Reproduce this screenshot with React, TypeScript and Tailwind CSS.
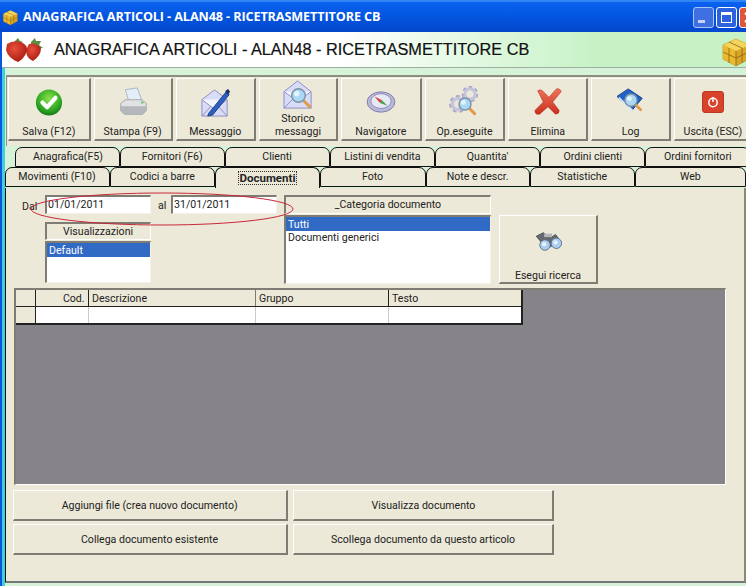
import React from 'react';

// the reference's UI font is narrower than Roboto, so labels get squeezed a bit
function T({ children, left }: { children: React.ReactNode; left?: boolean }) {
  return <span className={`inline-block whitespace-nowrap scale-x-[0.92] ${left ? 'origin-left' : ''}`}>{children}</span>;
}

function Salva() {
  return (
    <svg width="28" height="29" viewBox="0 0 30 30">
      <defs>
        <radialGradient id="gr" cx="50%" cy="35%" r="65%">
          <stop offset="0" stopColor="#8be04a" />
          <stop offset="0.7" stopColor="#2fa822" />
          <stop offset="1" stopColor="#137a18" />
        </radialGradient>
      </defs>
      <circle cx="15" cy="15" r="14" fill="url(#gr)" />
      <path d="M8 15 L13 20 L22 10" fill="none" stroke="#fff" strokeWidth="4.5" strokeLinecap="round" strokeLinejoin="round" />
    </svg>
  );
}

function Stampa() {
  return (
    <svg width="31" height="31" viewBox="0 0 34 34">
      <path d="M8 3 L21 1 L26 14 L12 16 Z" fill="#e4eef8" stroke="#a4b2c2" />
      <path d="M3 18 L8 14 L26 14 L31 18 L31 26 L27 30 L7 30 L3 26 Z" fill="#e0e2e4" stroke="#a0a3a8" />
      <path d="M3 21 L31 21 L31 26 L27 30 L7 30 L3 26 Z" fill="#b4b7bc" />
      <rect x="25" y="16" width="3" height="2" fill="#6cc26a" />
    </svg>
  );
}

function Busta() {
  return (
    <svg width="31" height="31" viewBox="0 0 32 32">
      <path d="M2 13 L15 3 L28 13 L28 30 L2 30 Z" fill="#d9dcf6" stroke="#8c8cc4" />
      <path d="M2 30 L13 18 M28 30 L17 18" stroke="#8c8cc4" fill="none" />
      <path d="M2 13 L15 23 L28 13" fill="#f4f4ff" stroke="#8c8cc4" />
      <path d="M9 27 L27 5 L30 8 L13 29 L8 30 Z" fill="#2b5fc4" stroke="#14306c" strokeWidth="0.8" />
      <path d="M26 4 L29 2 L31 5 L29 8 Z" fill="#14306c" />
    </svg>
  );
}

function Lente({ x, y, r }: { x: number; y: number; r: number }) {
  const e = x + r * 0.7;
  const f = y + r * 0.7;
  return (
    <g>
      <path d={`M${e} ${f} L${e + r * 0.9} ${f + r * 0.9}`} stroke="#e09a4a" strokeWidth="3" strokeLinecap="round" />
      <circle cx={x} cy={y} r={r} fill="#a8d8f4" stroke="#7d93a8" strokeWidth="1.5" />
      <circle cx={x - r * 0.25} cy={y - r * 0.25} r={r * 0.4} fill="#e4f4fc" />
    </g>
  );
}

function Storico() {
  return (
    <svg width="31" height="31" viewBox="0 0 32 32">
      <path d="M1 12 L15 1 L29 12 L29 29 L1 29 Z" fill="#d9dcf6" stroke="#8c8cc4" />
      <path d="M1 29 L12 18 M29 29 L20 20" stroke="#8c8cc4" fill="none" />
      <path d="M1 12 L15 22 L29 12" fill="#f4f4ff" stroke="#8c8cc4" />
      <Lente x={16} y={16} r={7} />
    </svg>
  );
}

function Bussola() {
  return (
    <svg width="32" height="24" viewBox="0 0 32 26">
      <ellipse cx="16" cy="13" rx="15" ry="11" fill="#b8b8dc" stroke="#7c7ca8" />
      <ellipse cx="16" cy="12" rx="11" ry="8" fill="#e8e8f4" stroke="#8c8cb4" />
      <path d="M9 7 L17 11 L15 14 Z" fill="#d83a2c" />
      <path d="M23 17 L17 11 L15 14 Z" fill="#3ca050" />
    </svg>
  );
}

function Gear({ x, y, r }: { x: number; y: number; r: number }) {
  return (
    <g>
      <circle cx={x} cy={y} r={r} fill="none" stroke="#a8a8c8" strokeWidth={r * 0.55} strokeDasharray={`${r * 0.5} ${r * 0.38}`} />
      <circle cx={x} cy={y} r={r * 0.8} fill="none" stroke="#c4c4dc" strokeWidth={r * 0.5} />
    </g>
  );
}

function OpEseguite() {
  return (
    <svg width="32" height="32" viewBox="0 0 32 32">
      <Gear x={9} y={18} r={7} />
      <Gear x={21} y={8} r={6.5} />
      <Lente x={16} y={18} r={6} />
    </svg>
  );
}

function Elimina() {
  return (
    <svg width="28" height="28" viewBox="0 0 30 30">
      <defs>
        <linearGradient id="rx" x1="0" y1="0" x2="0" y2="1">
          <stop offset="0" stopColor="#f0735a" />
          <stop offset="1" stopColor="#c8301c" />
        </linearGradient>
      </defs>
      <path d="M4 3 Q7 1 9 3 L16 10 L24 1 Q28 0 29 4 L20 15 L27 24 Q27 28 23 28 L15 20 L6 28 Q1 29 1 24 L10 15 Z" fill="url(#rx)" stroke="#b52a18" strokeWidth="0.6" />
    </svg>
  );
}

function LogIcon() {
  return (
    <svg width="32" height="28" viewBox="0 0 32 30">
      <path d="M1 9 L13 1 L28 11 L17 24 Z" fill="#1f63c4" stroke="#12408c" />
      <path d="M3 11 L17 26 L18 23 L3 9 Z" fill="#dbe6f4" />
      <Lente x={16} y={13} r={6.5} />
    </svg>
  );
}

function Uscita() {
  return (
    <div className="w-[22px] h-[22px] rounded-[3px] bg-[#d9432b] border border-[#b83a22] flex items-center justify-center">
      <svg width="12" height="12" viewBox="0 0 12 12">
        <circle cx="6" cy="6.5" r="4.2" fill="none" stroke="#fff" strokeWidth="1.5" />
        <path d="M6 1 L6 6" stroke="#fff" strokeWidth="1.5" />
      </svg>
    </div>
  );
}

function Binocolo() {
  return (
    <svg width="31" height="21" viewBox="0 0 32 24">
      <path d="M2 6 L10 2 L18 8 L24 4 L30 12 L14 20 Z" fill="#666a72" stroke="#44474e" />
      <rect x="11" y="3" width="9" height="4" fill="#b4b6ba" />
      <circle cx="12" cy="16" r="6" fill="#a9cdf0" stroke="#5a6c84" />
      <circle cx="25" cy="14" r="6" fill="#a9cdf0" stroke="#5a6c84" />
      <circle cx="11" cy="15" r="2.5" fill="#e4f2fc" />
      <circle cx="24" cy="13" r="2.5" fill="#e4f2fc" />
    </svg>
  );
}

function Fragole() {
  return (
    <svg width="38" height="24" viewBox="0 0 38 24">
      <defs>
        <radialGradient id="fr" cx="40%" cy="35%" r="70%">
          <stop offset="0" stopColor="#e8503a" />
          <stop offset="1" stopColor="#a81a10" />
        </radialGradient>
      </defs>
      <path d="M26 4 L30 0 L31 3 L36 3 L34 7 L38 10 L32 10 L26 8 Z" fill="#5d8f45" />
      <path d="M10 3 L13 0 L15 3 L18 4 L14 6 L9 6 Z" fill="#5d8f45" />
      <path d="M24 6 Q31 4 36 10 Q36 18 28 23 Q21 20 21 12 Z" fill="url(#fr)" />
      <path d="M2 6 Q8 2 16 4 Q23 7 22 13 Q19 21 13 24 Q3 20 1 12 Z" fill="url(#fr)" />
    </svg>
  );
}

function Cubo({ size }: { size: number }) {
  return (
    <svg width={size} height={size} viewBox="0 0 28 28">
      <path d="M14 1 L27 7 L27 21 L14 28 L1 21 L1 7 Z" fill="#d9a526" stroke="#a87a14" strokeWidth="0.6" />
      <path d="M1 7 L14 13 L27 7 L14 1 Z" fill="#f4d45c" />
      <path d="M14 13 L14 28 L1 21 L1 7 Z" fill="#eab92f" />
      <path d="M1 14 L14 20 L27 14 M14 13 L14 28 M7 4 L20 10 L20 25 M7 10 L7 25" fill="none" stroke="#8a6210" strokeWidth="0.8" />
    </svg>
  );
}

function ToolButton({ w, label, children, ml = 'ml-[3px]' }: { w: string; label: React.ReactNode; children: React.ReactNode; ml?: string }) {
  return (
    <div className={`${w} ${ml} h-[63px] bg-[#ece9d8] border-t border-l border-white border-b-2 border-r-2 border-b-[#7f7c73] border-r-[#7f7c73] flex flex-col items-center shrink-0`}>
      <div className="flex-1 min-h-0 flex items-center justify-center">{children}</div>
      <div className="pb-[1px] text-center text-[11.5px] leading-[13px] text-[#222]">{label}</div>
    </div>
  );
}

function Tab({ w, label, active }: { w: string; label: string; active?: boolean }) {
  return (
    <div className={`${w} ${active ? 'h-[21px] bg-[#ece9d8] font-bold z-10 border-b-0' : 'h-[20px] bg-[#ece9d8] border-b border-b-[#111]'} shrink-0 rounded-t-[7px] border-t border-x border-[#111] flex items-center justify-center text-[11.5px] text-[#222] relative`}>
      {active ? <span className="border border-dotted border-[#333] px-[1px] leading-[12px]">{label}</span> : <T>{label}</T>}
    </div>
  );
}

function Sunken({ className, children }: { className: string; children?: React.ReactNode }) {
  return (
    <div className={`${className} bg-white border-t-2 border-l-2 border-t-[#7f7c73] border-l-[#7f7c73] border-b border-r border-b-[#f4f2e8] border-r-[#f4f2e8] text-[11.5px] text-[#222]`}>
      {children}
    </div>
  );
}

function Caption({ className, label }: { className: string; label: string }) {
  return (
    <div className={`${className} bg-[#ece9d8] border-t-2 border-l-2 border-t-[#7f7c73] border-l-[#7f7c73] border-b border-r border-b-white border-r-white flex items-center justify-center text-[11.5px] text-[#222]`}>
      <T>{label}</T>
    </div>
  );
}

function WideButton({ w, label }: { w: string; label: string }) {
  return (
    <div className={`${w} h-[31px] pt-[2px] bg-[#ece9d8] border-t border-l border-white border-b-2 border-r-2 border-b-[#7f7c73] border-r-[#7f7c73] flex items-center justify-center text-[11.5px] text-[#222]`}>
      <T>{label}</T>
    </div>
  );
}

export default function App() {
  return (
    <div className="font-['Roboto',Arial,sans-serif] w-[746px] h-[586px] overflow-hidden flex flex-col bg-[#0a54e0] relative">
      {/* title bar */}
      <div className="h-[32px] shrink-0 flex items-center pl-[3px] bg-gradient-to-b from-[#0a62ee] via-[#0455df] to-[#0447cc] border-t-2 border-t-[#2f86f4]">
        <Cubo size={15} />
        <span className="ml-[5px] text-[13px] font-bold text-white whitespace-nowrap tracking-[-0.1px] font-['Open_Sans',sans-serif] scale-x-[0.97] origin-left">ANAGRAFICA ARTICOLI - ALAN48 - RICETRASMETTITORE CB</span>
        <div className="ml-auto flex gap-[2px] mr-[-14px] mt-[1px]">
          <div className="w-[21px] h-[21px] rounded-[3px] border border-[#a8c4f4] bg-[#3f6fe0] flex items-end pl-[4px] pb-[4px]"><div className="w-[7px] h-[3px] bg-white/70" /></div>
          <div className="w-[21px] h-[21px] rounded-[3px] border border-white bg-[#2c62e0] p-[4px]"><div className="w-full h-full border border-white border-t-[3px]" /></div>
          <div className="w-[21px] h-[21px] rounded-[3px] border border-white bg-[#e0563a] flex items-center pl-[4px]">
            <svg width="11" height="11" viewBox="0 0 11 11"><path d="M1 1 L10 10 M10 1 L1 10" stroke="#fff" strokeWidth="2.2" /></svg>
          </div>
        </div>
      </div>

      <div className="flex-1 flex flex-col ml-[2px] bg-[#d6f2d8] min-h-0">
        {/* header */}
        <div className="h-[36px] shrink-0 flex items-center bg-gradient-to-r from-white from-45% to-[#c6f2c6] to-80% border-b border-b-[#9fae9f] pl-[3px]">
          <Fragole />
          <span className="ml-[11px] text-[16.3px] font-['Liberation_Sans',Arial,sans-serif] text-[#111] whitespace-nowrap [-webkit-text-stroke:0.2px_#111]">ANAGRAFICA ARTICOLI - ALAN48 - RICETRASMETTITORE CB</span>
          <div className="ml-auto mr-[-4px] mt-[4px]"><Cubo size={28} /></div>
        </div>

        <div className="flex-1 flex flex-col min-h-0 border-l-[3px] border-l-[#3fd0dc]">
          {/* toolbar */}
          <div className="mt-[7px] ml-[1px] h-[72px] shrink-0 border-t-2 border-t-[#8f8c80] border-l border-l-[#8f8c80] bg-[#ece9d8] flex pt-[1px] pl-[1px]">
            <ToolButton w="w-[83px]" ml="ml-0" label={<T>Salva (F12)</T>}><Salva /></ToolButton>
            <ToolButton w="w-[79px]" label={<T>Stampa (F9)</T>}><Stampa /></ToolButton>
            <ToolButton w="w-[80px]" label={<T>Messaggio</T>}><Busta /></ToolButton>
            <ToolButton w="w-[79px]" label={<T>Storico<br />messaggi</T>}><Storico /></ToolButton>
            <ToolButton w="w-[81px]" label={<T>Navigatore</T>}><Bussola /></ToolButton>
            <ToolButton w="w-[80px]" label={<T>Op.eseguite</T>}><OpEseguite /></ToolButton>
            <ToolButton w="w-[80px]" label={<T>Elimina</T>}><Elimina /></ToolButton>
            <ToolButton w="w-[80px]" label={<T>Log</T>}><LogIcon /></ToolButton>
            <ToolButton w="w-[78px]" label={<T>Uscita (ESC)</T>}><Uscita /></ToolButton>
          </div>

          {/* tabs */}
          <div className="-mt-[1px] bg-[#d6f2d8] pt-[1px] flex pl-[10px] z-[1]">
            {['Anagrafica(F5)', 'Fornitori (F6)', 'Clienti', 'Listini di vendita', "Quantita'", 'Ordini clienti', 'Ordini fornitori'].map((t) => (
              <Tab key={t} w="w-[105px]" label={t} />
            ))}
          </div>
          <div className="flex z-[2]">
            <Tab w="w-[105px]" label="Movimenti (F10)" />
            <Tab w="w-[105px]" label="Codici a barre" />
            <Tab w="w-[105px]" label="Documenti" active />
            <Tab w="w-[106px]" label="Foto" />
            <Tab w="w-[104px]" label="Note e descr." />
            <Tab w="w-[105px]" label="Statistiche" />
            <Tab w="w-[111px]" label="Web" />
          </div>

          {/* page */}
          <div className="flex-1 mb-[3px] bg-[#ece9d8] border-l border-l-[#111] border-b-2 border-b-[#777] border-r-2 border-r-[#888a78] relative pl-[8px]">
            <div className="flex items-start pt-[7px] h-[100px]">
              <div className="w-[31px] pt-[3px] pl-[8px] text-[11.5px] text-[#222]"><T left>Dal</T></div>
              <div className="flex flex-col w-[106px]">
                <Sunken className="h-[19px] pl-[1px] flex items-center w-[106px]"><T left>01/01/2011</T></Sunken>
                <Caption className="h-[18px] mt-[8px]" label="Visualizzazioni" />
                <Sunken className="h-[42px] mt-[1px]">
                  <div className="h-[14px] bg-[#316ac5] text-white pl-[2px] leading-[14px]"><T left>Default</T></div>
                </Sunken>
              </div>
              <div className="w-[20px] pt-[2px] pl-[7px] text-[11.5px] text-[#222]"><T left>al</T></div>
              <Sunken className="h-[19px] w-[106px] pl-[1px] flex items-center"><T left>31/01/2011</T></Sunken>
              <div className="flex flex-col w-[207px] ml-[7px]">
                <Caption className="h-[19px]" label="_Categoria documento" />
                <Sunken className="h-[69px] mt-[1px]">
                  <div className="h-[14px] bg-[#316ac5] text-white pl-[2px] leading-[14px]"><T left>Tutti</T></div>
                  <div className="pl-[2px] leading-[13px]"><T left>Documenti generici</T></div>
                </Sunken>
              </div>
              <div className="w-[99px] h-[69px] mt-[20px] ml-[8px] bg-[#ece9d8] border-t border-l border-white border-b-2 border-r-2 border-b-[#7f7c73] border-r-[#7f7c73] flex flex-col items-center text-[11.5px] leading-[13px] text-[#222]">
                <div className="mt-[15px]"><Binocolo /></div>
                <div className="mt-auto"><T>Esegui ricerca</T></div>
              </div>
            </div>

            {/* grid */}
            <div className="w-[712px] h-[197px] bg-[#868488] border-t-2 border-l-2 border-t-[#7f7c73] border-l-[#7f7c73] border-r border-b border-r-white border-b-white">
              <div className="w-[507px] border-r-2 border-b-2 border-[#222] text-[11.5px] text-[#222]">
                <div className="flex h-[17px] bg-[#ece9d8] border-b border-b-[#222]">
                  <div className="w-[20px] border-r border-r-[#222]" />
                  <div className="w-[53px] border-r border-r-[#222] text-right pr-[2px] leading-[16px]"><T>Cod.</T></div>
                  <div className="w-[167px] border-r border-r-[#7f7c73] pl-[3px] leading-[16px]"><T left>Descrizione</T></div>
                  <div className="w-[133px] border-r border-r-[#222] pl-[3px] leading-[16px]"><T left>Gruppo</T></div>
                  <div className="flex-1 pl-[3px] leading-[16px]"><T left>Testo</T></div>
                </div>
                <div className="flex h-[16px] bg-white">
                  <div className="w-[20px] bg-[#ece9d8] border-r border-r-[#222]" />
                  <div className="w-[53px] border-r border-r-[#ccc]" />
                  <div className="w-[167px] border-r border-r-[#ccc]" />
                  <div className="w-[133px] border-r border-r-[#ccc]" />
                  <div className="flex-1" />
                </div>
              </div>
            </div>

            {/* bottom buttons */}
            <div className="mt-[5px] -ml-[1px] flex gap-[5px] w-[541px]">
              <WideButton w="w-[275px]" label="Aggiungi file (crea nuovo documento)" />
              <WideButton w="w-[261px]" label="Visualizza documento" />
            </div>
            <div className="mt-[3px] -ml-[1px] flex gap-[5px] w-[541px]">
              <WideButton w="w-[275px]" label="Collega documento esistente" />
              <WideButton w="w-[261px]" label="Scollega documento da questo articolo" />
            </div>
          </div>
        </div>
      </div>

      {/* hand-drawn red ellipse over the date fields */}
      <svg className="absolute left-[28px] top-[190px] pointer-events-none" width="268" height="38" viewBox="0 0 268 38">
        <ellipse cx="134" cy="19" rx="131" ry="16" fill="none" stroke="#c8283a" strokeWidth="1" />
      </svg>
    </div>
  );
}
